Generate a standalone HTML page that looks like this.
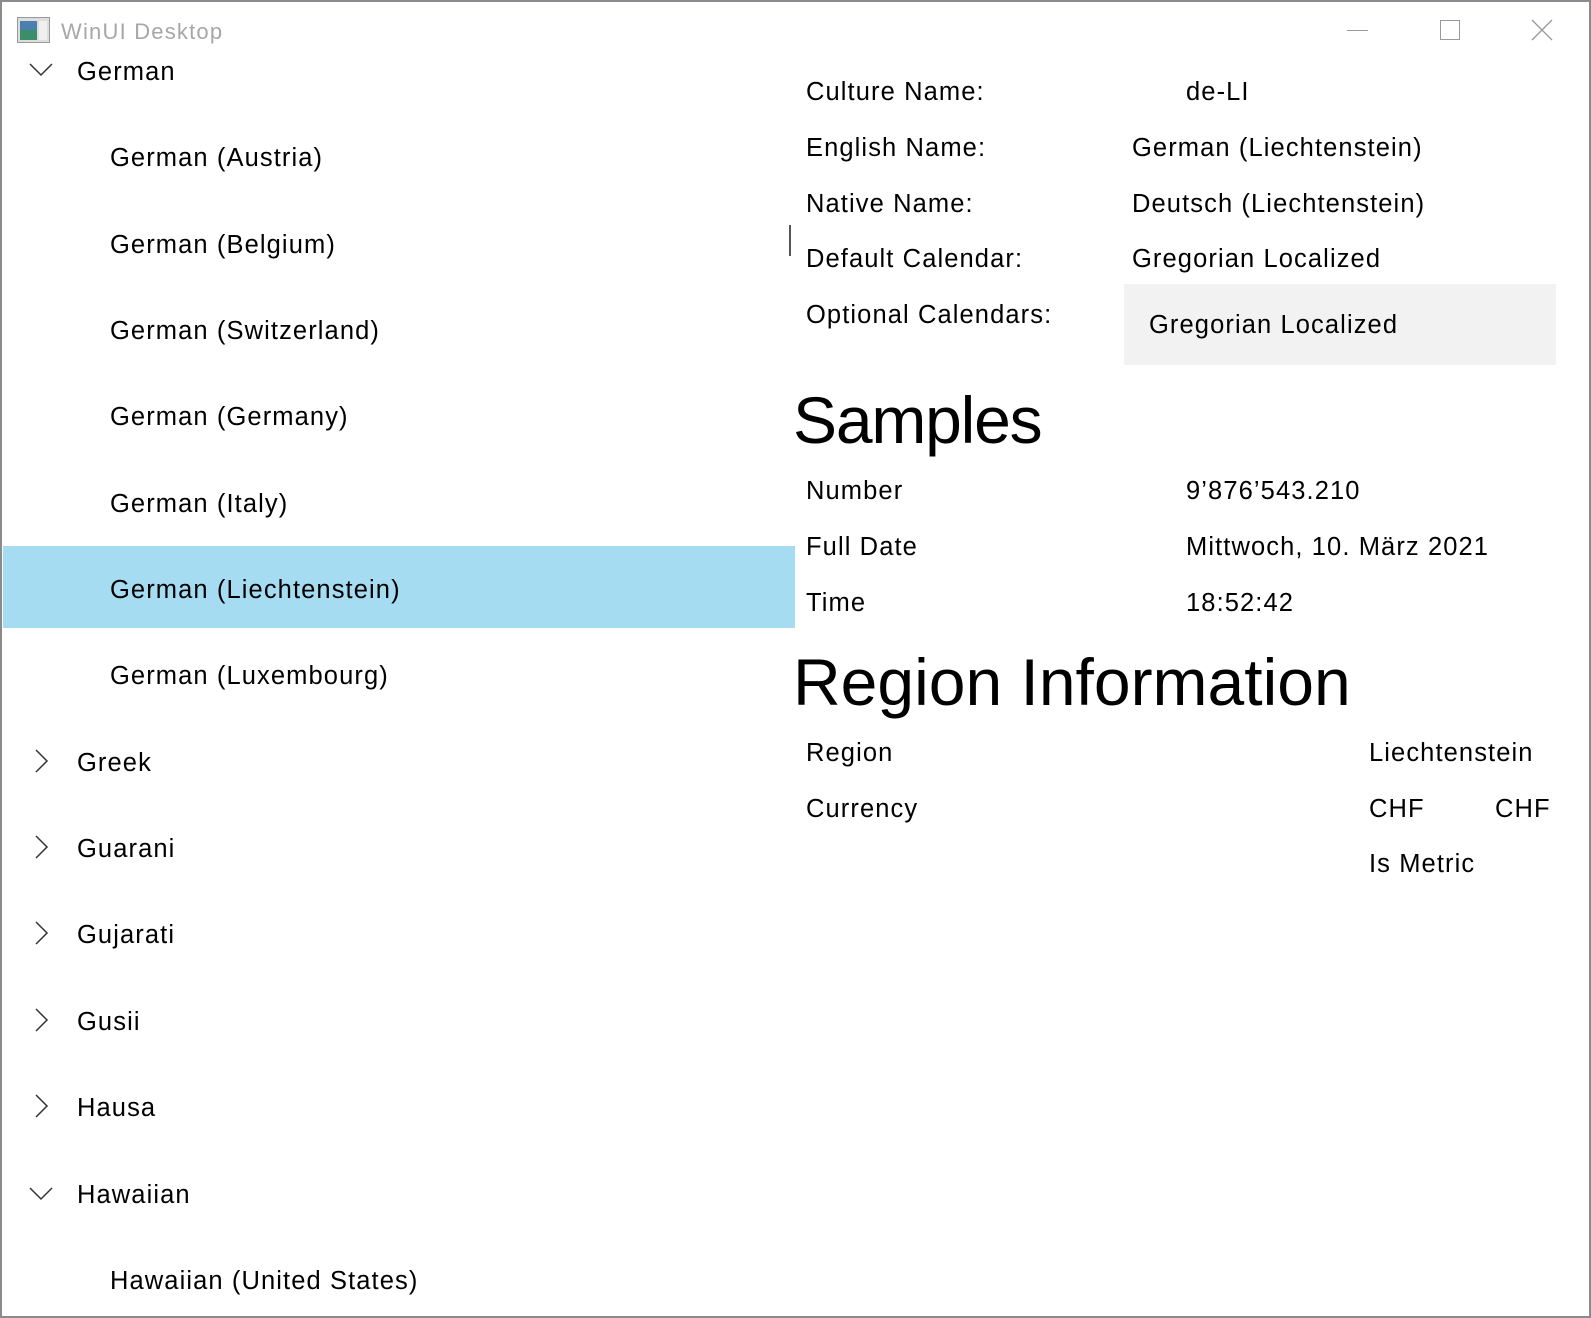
<!DOCTYPE html>
<html><head><meta charset="utf-8"><style>
html,body{margin:0;padding:0}
body{width:1591px;height:1318px;position:relative;overflow:hidden;background:#fff;font-family:"Liberation Sans",sans-serif;color:#000}
.frame{position:absolute;left:0;top:0;width:1587px;height:1314px;border:2px solid #8a8a8f}
.t{position:absolute;font-size:25.5px;line-height:30px;white-space:nowrap;transform:translateY(-14px);letter-spacing:1.1px}
.h{position:absolute;white-space:nowrap;font-size:66px;line-height:80px;transform:translateY(-40px);letter-spacing:-1.2px}
.chev{position:absolute}
</style></head><body>
<div class="frame"></div>
<svg style="position:absolute;left:17px;top:17px" width="33" height="26"><rect x="0.5" y="0.5" width="32" height="25" fill="#ddd" stroke="#999"/><rect x="3" y="4" width="17" height="19" fill="#3a8f6a"/><rect x="3" y="4" width="17" height="9" fill="#4a7fb0"/><rect x="22" y="4" width="8" height="19" fill="#f0f0f0"/></svg>
<div class="t" style="left:61px;top:31px;font-size:22px;color:#a7a7a7;letter-spacing:1.2px">WinUI Desktop</div>
<div style="position:absolute;left:1347px;top:30px;width:21px;height:1px;background:#999"></div>
<div style="position:absolute;left:1440px;top:20px;width:18px;height:18px;border:1px solid #999"></div>
<svg style="position:absolute;left:1531px;top:19px" width="22" height="22"><path d="M1 1L21 21M21 1L1 21" stroke="#999" stroke-width="1.3"/></svg>

<div style="position:absolute;left:3px;top:546px;width:792px;height:82px;background:#a5dcf2"></div>
<svg class="chev" style="left:29px;top:63px" width="24" height="14"><path d="M1 1L12 12L23 1" fill="none" stroke="#333" stroke-width="1.5"/></svg>
<div class="t" style="left:77px;top:71px">German</div>
<div class="t" style="left:110px;top:157px">German (Austria)</div>
<div class="t" style="left:110px;top:244px">German (Belgium)</div>
<div class="t" style="left:110px;top:330px">German (Switzerland)</div>
<div class="t" style="left:110px;top:416px">German (Germany)</div>
<div class="t" style="left:110px;top:503px">German (Italy)</div>
<div class="t" style="left:110px;top:589px">German (Liechtenstein)</div>
<div class="t" style="left:110px;top:675px">German (Luxembourg)</div>
<svg class="chev" style="left:35px;top:749px" width="14" height="24"><path d="M1 1L12 12L1 23" fill="none" stroke="#333" stroke-width="1.5"/></svg>
<div class="t" style="left:77px;top:762px">Greek</div>
<svg class="chev" style="left:35px;top:835px" width="14" height="24"><path d="M1 1L12 12L1 23" fill="none" stroke="#333" stroke-width="1.5"/></svg>
<div class="t" style="left:77px;top:848px">Guarani</div>
<svg class="chev" style="left:35px;top:921px" width="14" height="24"><path d="M1 1L12 12L1 23" fill="none" stroke="#333" stroke-width="1.5"/></svg>
<div class="t" style="left:77px;top:934px">Gujarati</div>
<svg class="chev" style="left:35px;top:1008px" width="14" height="24"><path d="M1 1L12 12L1 23" fill="none" stroke="#333" stroke-width="1.5"/></svg>
<div class="t" style="left:77px;top:1021px">Gusii</div>
<svg class="chev" style="left:35px;top:1094px" width="14" height="24"><path d="M1 1L12 12L1 23" fill="none" stroke="#333" stroke-width="1.5"/></svg>
<div class="t" style="left:77px;top:1107px">Hausa</div>
<svg class="chev" style="left:29px;top:1187px" width="24" height="14"><path d="M1 1L12 12L23 1" fill="none" stroke="#333" stroke-width="1.5"/></svg>
<div class="t" style="left:77px;top:1194px">Hawaiian</div>
<div class="t" style="left:110px;top:1280px">Hawaiian (United States)</div>

<div style="position:absolute;left:789px;top:225px;width:2px;height:31px;background:#555"></div>
<div class="t" style="left:806px;top:91px">Culture Name:</div>
<div class="t" style="left:1186px;top:91px">de-LI</div>
<div class="t" style="left:806px;top:147px">English Name:</div>
<div class="t" style="left:1132px;top:147px">German (Liechtenstein)</div>
<div class="t" style="left:806px;top:203px">Native Name:</div>
<div class="t" style="left:1132px;top:203px">Deutsch (Liechtenstein)</div>
<div class="t" style="left:806px;top:258px">Default Calendar:</div>
<div class="t" style="left:1132px;top:258px">Gregorian Localized</div>
<div class="t" style="left:806px;top:314px">Optional Calendars:</div>
<div style="position:absolute;left:1124px;top:284px;width:432px;height:81px;background:#f2f2f2"></div>
<div class="t" style="left:1149px;top:324px">Gregorian Localized</div>

<div class="h" style="left:793px;top:420px">Samples</div>
<div class="t" style="left:806px;top:490px">Number</div>
<div class="t" style="left:1186px;top:490px">9’876’543.210</div>
<div class="t" style="left:806px;top:546px">Full Date</div>
<div class="t" style="left:1186px;top:546px">Mittwoch, 10. März 2021</div>
<div class="t" style="left:806px;top:602px">Time</div>
<div class="t" style="left:1186px;top:602px">18:52:42</div>

<div class="h" style="left:793px;top:682px;letter-spacing:0">Region Information</div>
<div class="t" style="left:806px;top:752px">Region</div>
<div class="t" style="left:1369px;top:752px">Liechtenstein</div>
<div class="t" style="left:806px;top:808px">Currency</div>
<div class="t" style="left:1369px;top:808px">CHF</div>
<div class="t" style="left:1495px;top:808px">CHF</div>
<div class="t" style="left:1369px;top:863px">Is Metric</div>
</body></html>
